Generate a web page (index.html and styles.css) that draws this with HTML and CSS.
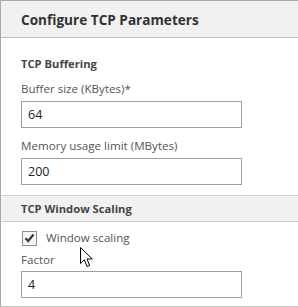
FILE: index.html
```html
<!DOCTYPE html>
<html lang="en">
<head>
  <meta charset="UTF-8" />
  <title>Configure TCP Parameters</title>
  <link rel="stylesheet" href="styles.css">
</head>
<body>
  <div class="panel">
    <div class="panel-header">Configure TCP Parameters</div>

    <div class="section">
      <div class="section-title">TCP Buffering</div>
      <div class="form-group">
        <label for="bufSize">Buffer size (KBytes)*</label>
        <input type="text" id="bufSize" value="64" />
      </div>
      <div class="form-group">
        <label for="memLimit">Memory usage limit (MBytes)</label>
        <input type="text" id="memLimit" value="200" />
      </div>
    </div>

    <div class="section-bar">TCP Window Scaling</div>

    <div class="section">
      <div class="check-row">
        <span class="check-box">
          <svg width="11" height="10" viewBox="0 0 11 10"><path d="M1.5 5.2 L4.2 8 L9.5 1.5" fill="none" stroke="#3a3a3a" stroke-width="2.2"/></svg>
        </span>
        <span class="check-label">Window scaling</span>
      </div>
      <div class="form-group factor">
        <label for="factor">Factor</label>
        <input type="text" id="factor" value="4" />
      </div>
    </div>

    <svg class="cursor" width="14" height="21" viewBox="0 0 14 21">
      <path d="M0.5 0.5 L0.5 16.5 L4.3 12.8 L7 19.5 L9.6 18.4 L7 12 L12.3 12 Z" fill="#fff" stroke="#000" stroke-width="1"/>
    </svg>
  </div>
</body>
</html>
```

FILE: styles.css
```css
body {
  margin: 0;
  background-color: #fff;
  font-family: "Open Sans", "Noto Sans", sans-serif;
  color: #555;
}

.panel {
  position: relative;
  border-left: 1px solid #a3aab2;
  border-top: 1px solid #a3aab2;
  border-bottom: 1px solid #c4c4c4;
  height: 307px;
  box-sizing: border-box;
}

.panel-header {
  background-color: #f1f1f1;
  border-bottom: 1px solid #bdbdbd;
  height: 37px;
  box-sizing: border-box;
  padding: 0 0 0 20px;
  line-height: 38px;
  font-size: 13.6px;
  font-weight: bold;
  color: #333;
}

.section {
  padding: 0 0 0 20px;
}

.section-title {
  margin-top: 18px;
  line-height: 16px;
  font-size: 11.2px;
  font-weight: bold;
  color: #444;
}

.form-group {
  display: flex;
  flex-direction: column;
  margin-top: 10px;
}

.section-title + .form-group {
  margin-top: 9px;
}

label,
.check-label {
  font-size: 11.6px;
  line-height: 16px;
  color: #555;
  margin-bottom: 4px;
}

input[type="text"] {
  width: 221px;
  height: 27px;
  box-sizing: border-box;
  border: 1px solid #a0a0a0;
  padding: 0 6px;
  font-family: inherit;
  font-size: 12.5px;
  color: #222;
  outline: none;
}

.section-bar {
  margin-top: 10px;
  background-color: #f1f1f1;
  border-top: 1px solid #cfcfcf;
  border-bottom: 1px solid #cfcfcf;
  height: 27px;
  box-sizing: border-box;
  padding: 0 0 0 20px;
  line-height: 25px;
  font-size: 11.2px;
  font-weight: bold;
  color: #444;
}

.check-row {
  display: flex;
  align-items: center;
  margin-top: 8px;
}

.check-box {
  width: 13px;
  height: 13px;
  border: 1px solid #8f8f8f;
  background-color: #f4f4f4;
  display: flex;
  align-items: center;
  justify-content: center;
  margin-left: 1px;
}

.check-label {
  margin: 0 0 0 9px;
}

.form-group.factor {
  margin-top: 6px;
}

.form-group.factor label {
  margin-bottom: 3px;
}

.cursor {
  position: absolute;
  left: 79px;
  top: 246px;
}
```
